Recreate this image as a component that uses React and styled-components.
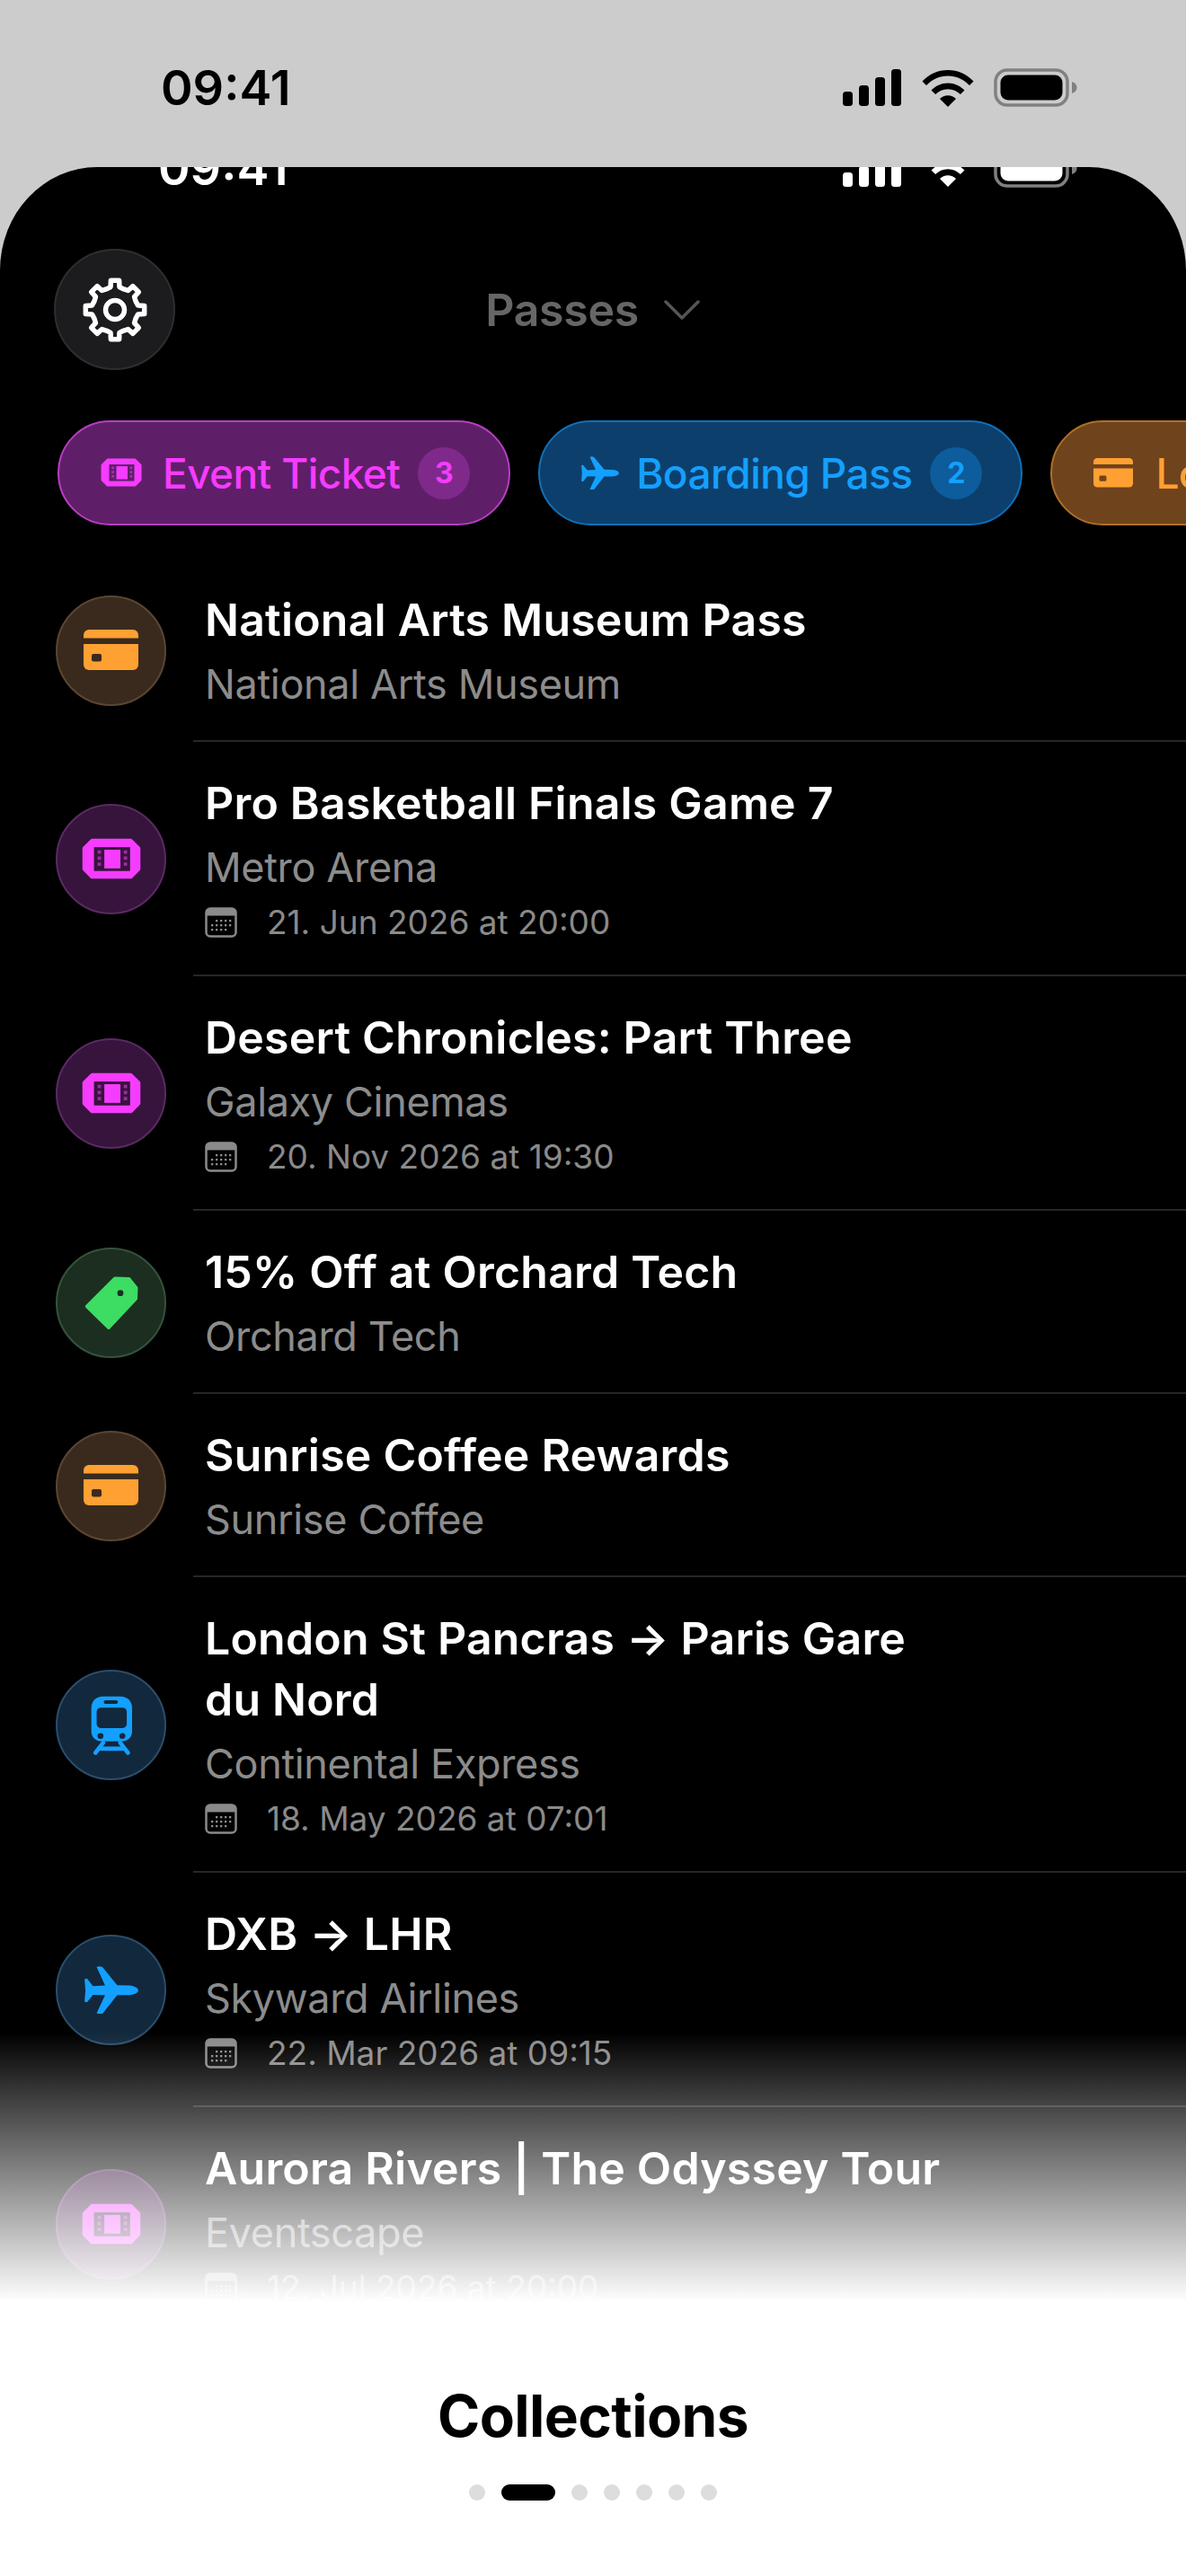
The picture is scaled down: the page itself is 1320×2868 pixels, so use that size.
import React from "react";
import styled, { createGlobalStyle } from "styled-components";

const GlobalStyle = createGlobalStyle`
  html, body {
    margin: 0;
    padding: 0;
    background: #fff;
  }
  * {
    box-sizing: border-box;
  }
`;

const FONT = `Inter, "Noto Sans", "Liberation Sans", sans-serif`;

const tones = {
  purple: { main: "#f53cff", chip: "#5f1f68", line: "#b63fc2", badge: "#7f2a8b", circle: "#36143c", ring: "#5b2a63" },
  blue: { main: "#14a0ff", chip: "#0d3f6c", line: "#1070b8", badge: "#0d5c9c", circle: "#12283c", ring: "#2b4e6c" },
  orange: { main: "#ffa033", chip: "#6f431c", line: "#b06f28", badge: "#8a5522", circle: "#3a2a1d", ring: "#5b4632" },
  green: { main: "#3ddc63", chip: "#1b4a26", line: "#2d8a45", badge: "#2a6a38", circle: "#1c2e20", ring: "#33543b" },
};

const gearPath = () => {
  const pts = [];
  for (let i = 0; i < 8; i++) {
    const a = i * 45;
    [
      [a - 22, 25],
      [a - 11, 26],
      [a - 8, 33],
      [a + 8, 33],
      [a + 11, 26],
      [a + 22, 25],
    ].forEach(([deg, r]) => {
      const rad = ((deg - 90) * Math.PI) / 180;
      pts.push(`${(36 + r * Math.cos(rad)).toFixed(2)} ${(36 + r * Math.sin(rad)).toFixed(2)}`);
    });
  }
  return `M${pts.join("L")}Z`;
};

const GearIcon = () => (
  <svg width="72" height="72" viewBox="0 0 72 72" fill="none" stroke="#fff" strokeWidth="5.5" strokeLinejoin="round">
    <path d={gearPath()} />
    <circle cx="36" cy="36" r="10.500" />
  </svg>
);

const SignalIcon = ({ color }) => (
  <svg width="66" height="41" viewBox="0 0 66 41" fill={color}>
    <rect x="0" y="25" width="11" height="16" rx="3.5" />
    <rect x="18" y="18" width="11" height="23" rx="3.5" />
    <rect x="36" y="9" width="11" height="32" rx="3.5" />
    <rect x="54" y="0" width="11" height="41" rx="3.5" />
  </svg>
);

const WifiIcon = ({ color }) => (
  <svg width="58" height="42" viewBox="0 0 58 42" fill={color}>
    <path d="M0.5 13.5C8 5.5 18 1 29 1s21 4.5 28.5 12.5l-4.5 4.6C46.5 11.3 38.2 7.5 29 7.5S11.5 11.3 5 18.1z" />
    <path d="M10.5 23.5C15.3 18.6 21.8 15.5 29 15.5s13.7 3.1 18.5 8l-4.6 4.6C39.3 24.5 34.4 22.2 29 22.2s-10.3 2.3-13.9 5.9z" />
    <path d="M20 33c2.300-2.300 5.600-3.800 9-3.800s6.700 1.500 9 3.800L29 42z" />
  </svg>
);

const BatteryIcon = ({ color }) => (
  <svg width="94" height="43" viewBox="0 0 94 43">
    <rect x="2" y="2" width="80" height="39" rx="13" fill="none" stroke="#808080" strokeWidth="3.5" />
    <rect x="7.500" y="7.500" width="69" height="28" rx="8.500" fill={color} />
    <path d="M87 15c3.500 1 5.500 3.500 5.500 6.500S90.500 27 87 28z" fill="#808080" />
  </svg>
);

const CalendarIcon = () => (
  <svg width="36" height="34" viewBox="0 0 36 34">
    <rect x="1.500" y="1.500" width="33" height="31" rx="4.500" fill="none" stroke="#8a8a8a" strokeWidth="2.500" />
    <path d="M1.500 6a4.500 4.500 0 0 1 4.500-4.500h24a4.500 4.500 0 0 1 4.500 4.500v3.500h-33z" fill="#8a8a8a" />
    {[14, 19, 24].map((y) =>
      [8, 13, 18, 23, 28].map((x) =>
        (y === 14 && x < 13) || (y === 24 && x > 23) ? null : (
          <rect key={`${x}-${y}`} x={x - 1} y={y} width="2.300" height="2.300" fill="#8a8a8a" />
        )
      )
    )}
  </svg>
);

const TicketIcon = ({ color, hole, width }) => (
  <svg width={width} height={width * 0.7} viewBox="0 0 46 32">
    <path
      d="M8 2h30l6 6v16l-6 6H8l-6-6V8z"
      fill={color}
      stroke={color}
      strokeWidth="3"
      strokeLinejoin="round"
    />
    <rect x="9.500" y="7" width="28" height="18.500" fill={hole} />
    <rect x="17.500" y="9" width="12.500" height="14.500" fill={color} />
    {[9.5, 14.2, 18.900].map((y) => (
      <React.Fragment key={y}>
        <rect x="12.300" y={y} width="2.600" height="2.600" fill={color} opacity="0.55" />
        <rect x="32.600" y={y} width="2.600" height="2.600" fill={color} opacity="0.55" />
      </React.Fragment>
    ))}
  </svg>
);

const CardIcon = ({ color, hole, width }) => (
  <svg width={width} height={width * 0.74} viewBox="0 0 61 45" fill={color}>
    <path d="M6 0h49a6 6 0 0 1 6 6v3.500H0V6a6 6 0 0 1 6-6z" />
    <path d="M0 16h61v23a6 6 0 0 1-6 6H6a6 6 0 0 1-6-6z" />
    <rect x="9" y="27" width="11" height="8.500" rx="2" fill={hole} />
  </svg>
);

const PlaneIcon = ({ color, width }) => (
  <svg width={width} height={width * 0.885} viewBox="197 177 178 158" fill={color}>
    <path d="M375 257C375 247 355 241 340 241L305 240L257 181Q247 175 237 180L265 241L225 243L205 218L197 220L200 257L197 295L205 297L225 272L265 273L237 333Q247 338 257 334L305 273L340 273C355 273 375 267 375 257Z" />
  </svg>
);

const TagIcon = ({ color, hole, width }) => (
  <svg width={width} height={width} viewBox="63 58 60 60">
    <path
      d="M97 61.500L112.500 62L120.500 72L120 84L90 116L66 92.500Z"
      fill={color}
      stroke={color}
      strokeWidth="4"
      strokeLinejoin="round"
    />
    <circle cx="103" cy="77.700" r="3.400" fill={hole} />
  </svg>
);

const TrainIcon = ({ color, hole, width }) => (
  <svg width={width} height={width * 1.4} viewBox="205 140 146 204">
    <path
      d="M250 145H308C332 145 348 160 348 185V262C348 285 332 297 312 297H246C226 297 210 285 210 262V185C210 160 226 145 250 145Z"
      fill={color}
    />
    <rect x="228" y="183" width="102" height="69" rx="14" fill={hole} />
    <rect x="252" y="158" width="48" height="12" rx="6" fill={hole} />
    <circle cx="241" cy="279" r="10" fill={hole} />
    <circle cx="315" cy="279" r="10" fill={hole} />
    <g stroke={color} strokeWidth="14" strokeLinecap="round" fill="none">
      <path d="M250 302L224 336" />
      <path d="M308 302L334 336" />
      <path d="M242 322H316" />
    </g>
  </svg>
);

const chips = [
  { tone: "purple", label: "Event Ticket", count: 3, kind: "ticket", gap: 23 },
  { tone: "blue", label: "Boarding Pass", count: 2, kind: "plane", gap: 19 },
  { tone: "orange", label: "Loyalty Card", count: 2, kind: "card", gap: 25 },
];

const passes = [
  { tone: "orange", kind: "card", title: "National Arts Museum Pass", sub: "National Arts Museum" },
  { tone: "purple", kind: "ticket", title: "Pro Basketball Finals Game 7", sub: "Metro Arena", date: "21. Jun 2026 at 20:00" },
  { tone: "purple", kind: "ticket", title: "Desert Chronicles: Part Three", sub: "Galaxy Cinemas", date: "20. Nov 2026 at 19:30" },
  { tone: "green", kind: "tag", title: "15% Off at Orchard Tech", sub: "Orchard Tech" },
  { tone: "orange", kind: "card", title: "Sunrise Coffee Rewards", sub: "Sunrise Coffee" },
  { tone: "blue", kind: "train", title: "London St Pancras → Paris Gare du Nord", sub: "Continental Express", date: "18. May 2026 at 07:01" },
  { tone: "blue", kind: "plane", title: "DXB → LHR", sub: "Skyward Airlines", date: "22. Mar 2026 at 09:15" },
  { tone: "purple", kind: "ticket", title: "Aurora Rivers | The Odyssey Tour", sub: "Eventscape", date: "12. Jul 2026 at 20:00" },
];

const PassGlyph = ({ kind, color, hole, small }) => {
  if (kind === "ticket") return <TicketIcon color={color} hole={hole} width={small ? 46 : 66} />;
  if (kind === "card") return <CardIcon color={color} hole={hole} width={small ? 44 : 61} />;
  if (kind === "plane") return <PlaneIcon color={color} width={small ? 42 : 60} />;
  if (kind === "tag") return <TagIcon color={color} hole={hole} width={60} />;
  return <TrainIcon color={color} hole={hole} width={48} />;
};

const StatusIcons = ({ color }) => (
  <StatusRight>
    <SignalIcon color={color} />
    <WifiIcon color={color} />
    <BatteryIcon color={color} />
  </StatusRight>
);

const App = () => {
  return (
    <Page>
      <GlobalStyle />
      <TopArea>
        <StatusBar>
          <StatusTime>09:41</StatusTime>
          <StatusIcons color="#000" />
        </StatusBar>
      </TopArea>
      <Screen>
        <StatusBar $inner>
          <StatusTime $inner>09:41</StatusTime>
          <StatusIcons color="#fff" />
        </StatusBar>
        <Header>
          <SettingsButton>
            <GearIcon />
          </SettingsButton>
          <HeaderTitle>
            Passes
            <svg width="42" height="24" viewBox="0 0 42 24" fill="none" stroke="#555" strokeWidth="3.5" strokeLinecap="round" strokeLinejoin="round">
              <path d="M3 3l18 18L39 3" />
            </svg>
          </HeaderTitle>
          <span />
        </Header>
        <ChipRow>
          {chips.map((chip) => (
            <Chip key={chip.label} $tone={chip.tone}>
              <PassGlyph kind={chip.kind} color={tones[chip.tone].main} hole={tones[chip.tone].chip} small />
              <ChipLabel $gap={chip.gap}>{chip.label}</ChipLabel>
              <ChipCount $tone={chip.tone}>{chip.count}</ChipCount>
            </Chip>
          ))}
        </ChipRow>
        <PassList>
          {passes.map((pass) => (
            <PassRow key={pass.title}>
              <PassCircle $tone={pass.tone}>
                <PassGlyph kind={pass.kind} color={tones[pass.tone].main} hole={tones[pass.tone].circle} />
              </PassCircle>
              <PassBody>
                <PassTitle>{pass.title}</PassTitle>
                <PassSub>{pass.sub}</PassSub>
                {pass.date && (
                  <PassDate>
                    <CalendarIcon />
                    {pass.date}
                  </PassDate>
                )}
              </PassBody>
            </PassRow>
          ))}
        </PassList>
        <Fade />
      </Screen>
      <Footer>
        <FooterTitle>Collections</FooterTitle>
        <Dots>
          {[0, 1, 2, 3, 4, 5, 6].map((i) => (
            <Dot key={i} $active={i === 1} />
          ))}
        </Dots>
      </Footer>
    </Page>
  );
};

export default App;

const Page = styled.div`
  width: 1320px;
  height: 2868px;
  display: flex;
  flex-direction: column;
  overflow: hidden;
  background: #ccc;
  font-family: ${FONT};
`;

const TopArea = styled.div`
  height: 186px;
  overflow: hidden;
  flex-shrink: 0;
`;

const StatusBar = styled.div`
  height: ${(p) => (p.$inner ? "180px" : "195px")};
  margin-top: ${(p) => (p.$inner ? "-89px" : "0")};
  padding: 0 120px 0 ${(p) => (p.$inner ? "176px" : "179px")};
  display: flex;
  align-items: center;
  justify-content: space-between;
`;

const StatusTime = styled.div`
  font-size: 54px;
  font-weight: 600;
  letter-spacing: 0;
  line-height: 60px;
  color: ${(p) => (p.$inner ? "#fff" : "#000")};
`;

const StatusRight = styled.div`
  display: flex;
  align-items: center;
  gap: 22px;
`;

const Screen = styled.div`
  position: relative;
  flex: 1;
  min-height: 0;
  overflow: hidden;
  background: #000;
  border-radius: 108px 108px 0 0 / 115px 115px 0 0;
`;

const Header = styled.div`
  display: grid;
  grid-template-columns: 135px 1fr 135px;
  align-items: center;
  padding: 0 60px;
`;

const SettingsButton = styled.div`
  width: 135px;
  height: 135px;
  border-radius: 50%;
  display: flex;
  align-items: center;
  justify-content: center;
  background: #1c1c1e;
  border: 2px solid #2e2e30;
`;

const HeaderTitle = styled.div`
  display: flex;
  align-items: center;
  justify-content: center;
  gap: 27px;
  font-size: 50px;
  font-weight: 600;
  color: #666;
  letter-spacing: -0.3px;
`;

const ChipRow = styled.div`
  display: flex;
  gap: 31px;
  padding-left: 64px;
  margin-top: 56px;
  overflow: hidden;
`;

const Chip = styled.div`
  flex-shrink: 0;
  height: 117px;
  padding: 0 43px 0 46px;
  display: flex;
  align-items: center;
  border-radius: 59px;
  background: ${(p) => tones[p.$tone].chip};
  border: 2.5px solid ${(p) => tones[p.$tone].line};
  color: ${(p) => tones[p.$tone].main};
`;

const ChipLabel = styled.span`
  margin: 0 20px 0 ${(p) => p.$gap}px;
  font-size: 46px;
  font-weight: 500;
  letter-spacing: -0.6px;
  white-space: nowrap;
`;

const ChipCount = styled.span`
  width: 58px;
  height: 58px;
  border-radius: 50%;
  display: flex;
  align-items: center;
  justify-content: center;
  font-size: 32px;
  font-weight: 700;
  background: ${(p) => tones[p.$tone].badge};
`;

const PassList = styled.div`
  margin-top: 37px;
  display: flex;
  flex-direction: column;
`;

const PassRow = styled.div`
  display: flex;
  align-items: center;
  padding-left: 62px;
`;

const PassCircle = styled.div`
  flex-shrink: 0;
  width: 123px;
  height: 123px;
  margin-right: 30px;
  border-radius: 50%;
  display: flex;
  align-items: center;
  justify-content: center;
  background: ${(p) => tones[p.$tone].circle};
  border: 2.5px solid ${(p) => tones[p.$tone].ring};
`;

const PassBody = styled.div`
  flex: 1;
  padding: 34px 0 30px 13px;
  border-bottom: 2px solid #262628;
`;

const PassTitle = styled.div`
  max-width: 830px;
  font-size: 50px;
  line-height: 68px;
  font-weight: 600;
  letter-spacing: 0.2px;
  color: #fff;
`;

const PassSub = styled.div`
  padding-top: 3px;
  margin-bottom: -3px;
  font-size: 45px;
  line-height: 70px;
  font-weight: 400;
  letter-spacing: -0.35px;
  color: #8c8c8c;
`;

const PassDate = styled.div`
  display: flex;
  align-items: center;
  gap: 33px;
  height: 57px;
  font-size: 37px;
  letter-spacing: 0;
  color: #8a8a8a;
`;

const Fade = styled.div`
  position: absolute;
  left: 0;
  right: 0;
  bottom: 0;
  height: 300px;
  background: linear-gradient(to bottom, rgba(255, 255, 255, 0), #fff);
`;

const Footer = styled.div`
  height: 305px;
  flex-shrink: 0;
  background: #fff;
  padding-top: 90px;
  display: flex;
  flex-direction: column;
  align-items: center;
`;

const FooterTitle = styled.div`
  font-size: 64px;
  line-height: 74px;
  font-weight: 700;
  letter-spacing: -0.6px;
  color: #000;
`;

const Dots = styled.div`
  display: flex;
  gap: 18px;
  margin-top: 39px;
`;

const Dot = styled.div`
  width: ${(p) => (p.$active ? "60px" : "18px")};
  height: 18px;
  border-radius: 9px;
  background: ${(p) => (p.$active ? "#000" : "#ddd")};
`;
